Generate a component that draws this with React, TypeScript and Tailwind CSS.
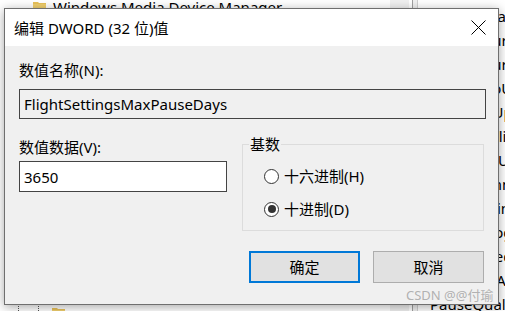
import React from "react";

const FONT = { fontFamily: '"Noto Sans", "Noto Sans CJK SC", sans-serif' };

function RegIcon() {
  return (
    <svg width="16" height="16" viewBox="0 0 16 16">
      <rect x="1.5" y="1.5" width="12" height="13" fill="#f4f4f4" stroke="#8a8a8a" />
      <path d="M10 1.5 L13.5 5" stroke="#8a8a8a" fill="none" />
      <rect x="3" y="4" width="4" height="3" fill="#c0504d" />
      <rect x="3" y="9" width="8" height="1" fill="#9a9a9a" />
      <rect x="3" y="11" width="8" height="1" fill="#9a9a9a" />
    </svg>
  );
}

function Folder() {
  return (
    <svg width="14" height="14" viewBox="0 0 14 14">
      <path d="M0 2 H5 L6 3 H13 V13 H0 Z" fill="#e8c15a" />
      <rect x="0" y="4" width="13" height="9" fill="#f0cf6e" />
    </svg>
  );
}

const rightRows = [
  "BranchReadinessLevel",
  "ActiveHoursEnd",
  "ActiveHoursStart",
  "AllowAutoUpdate",
  "AllowMUUpdateService",
  "DeferQualityUpdates",
  "ExcludeWUDrivers",
  "FlightCommitted",
  "FlightSettingsDisable",
  "InsiderProgramEnabled",
  "IsExpedited",
  "LastToastAction",
  "PauseQualityUpdates",
];

function Radio({ checked, label }: { checked?: boolean; label: string }) {
  return (
    <div className="flex h-[20px] items-center gap-[5px]">
      <div className="flex h-[15px] w-[15px] items-center justify-center rounded-full border border-[#333333] bg-white">
        {checked && <div className="h-[8px] w-[8px] rounded-full bg-[#333333]" />}
      </div>
      <span className="text-[15px] leading-[20px] text-black">{label}</span>
    </div>
  );
}

export default function App() {
  return (
    <div className="relative h-[311px] w-[505px] overflow-hidden bg-white" style={FONT}>
      {/* background: registry editor */}
      <div className="flex h-full w-full">
        <div className="flex h-full w-[390px] flex-col justify-between bg-white">
          <div className="-mt-[5px] flex h-[24px] items-center gap-[6px] pl-[33px]">
            <Folder />
            <span className="text-[15px] leading-[20px] text-black">Windows Media Device Manager</span>
          </div>
          <div className="-mb-[14px] flex h-[24px] items-center">
            <div className="h-full w-[19px] border-r border-dotted border-[#555]" />
            <div className="h-full w-[20px] border-r border-dotted border-[#555]" />
            <div className="ml-[13px]">
              <Folder />
            </div>
          </div>
        </div>
        <div className="h-full w-[19px] bg-[#f0f0f0]" />
        <div className="h-full w-[3px]" />
        <div className="h-full w-[1px] bg-[#a0a0a0]" />
        <div className="h-full w-[4px] bg-[#f0f0f0]" />
        <div className="h-full w-[1px] bg-[#d0d0d0]" />
        <div className="flex flex-1 flex-col overflow-hidden pl-[4px] pt-[4px]">
          {rightRows.map((r, i) => (
            <div key={i} className="flex h-[24px] shrink-0 items-center gap-[8px] whitespace-nowrap">
              <RegIcon />
              <span className="text-[15px] leading-[20px] text-black">{r}</span>
            </div>
          ))}
        </div>
      </div>

      {/* dialog */}
      <div className="absolute left-[4px] top-[8px] flex h-[297px] w-[495px] flex-col border border-[#6f6f6f] bg-[#f0f0f0] shadow-[0_2px_10px_rgba(0,0,0,0.35)]">
        <div className="flex h-[37px] items-center justify-between bg-white pl-[9px] pr-[12px]">
          <span className="text-[15px] leading-[20px] text-black">编辑 DWORD (32 位)值</span>
          <svg width="15" height="15" viewBox="0 0 15 15">
            <path d="M0.5 0.5 L14.5 14.5 M14.5 0.5 L0.5 14.5" stroke="#000" strokeWidth="1" />
          </svg>
        </div>
        <div className="flex flex-col pl-[14px] pr-[12px] pt-[14px]">
          <span className="text-[15px] leading-[20px] text-black">数值名称(N):</span>
          <div className="mt-[9px] flex h-[30px] items-center border border-[#444] bg-[#f0f0f0] pl-[4px] text-[15px] leading-[20px] text-black">
            FlightSettingsMaxPauseDays
          </div>
          <div className="mt-[18px] flex items-start gap-[15px]">
            <div className="flex w-[208px] flex-col">
              <span className="text-[15px] leading-[20px] text-black">数值数据(V):</span>
              <div className="mt-[4px] flex h-[31px] items-center border border-[#444] bg-white pl-[4px] text-[15px] leading-[20px] text-black">
                3650
              </div>
            </div>
            <div className="relative mt-[7px] flex h-[87px] w-[242px] flex-col gap-[13px] border border-[#dcdcdc] pl-[21px] pt-[21px]">
              <span className="absolute left-[6px] top-[-11px] bg-[#f0f0f0] px-[1px] text-[15px] leading-[20px] text-black">
                基数
              </span>
              <Radio label="十六进制(H)" />
              <Radio checked label="十进制(D)" />
            </div>
          </div>
          <div className="mr-[2px] mt-[20px] flex justify-end gap-[13px]">
            <div className="flex h-[32px] w-[111px] items-center justify-center border-2 border-[#0078d7] bg-[#e1e1e1] text-[15px] leading-[20px] text-black">
              确定
            </div>
            <div className="flex h-[32px] w-[111px] items-center justify-center border border-[#adadad] bg-[#e1e1e1] text-[15px] leading-[20px] text-black">
              取消
            </div>
          </div>
        </div>
      </div>

      <span className="absolute left-[406px] top-[287px] text-[13px] leading-[17px] text-[#a9a9a9]/90">CSDN @@付瑜</span>
    </div>
  );
}
